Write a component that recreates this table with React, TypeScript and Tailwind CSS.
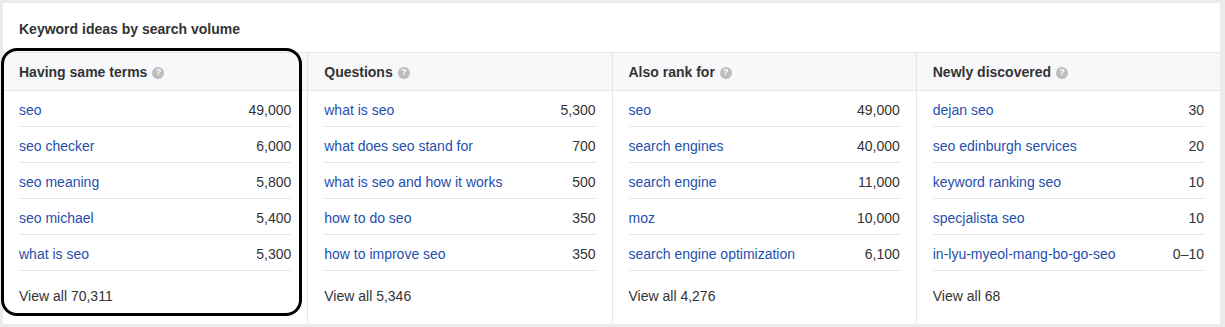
import React from "react";

type Row = { term: string; volume: string };
type Column = { title: string; rows: Row[]; total: string };

const columns: Column[] = [
  {
    title: "Having same terms",
    rows: [
      { term: "seo", volume: "49,000" },
      { term: "seo checker", volume: "6,000" },
      { term: "seo meaning", volume: "5,800" },
      { term: "seo michael", volume: "5,400" },
      { term: "what is seo", volume: "5,300" },
    ],
    total: "70,311",
  },
  {
    title: "Questions",
    rows: [
      { term: "what is seo", volume: "5,300" },
      { term: "what does seo stand for", volume: "700" },
      { term: "what is seo and how it works", volume: "500" },
      { term: "how to do seo", volume: "350" },
      { term: "how to improve seo", volume: "350" },
    ],
    total: "5,346",
  },
  {
    title: "Also rank for",
    rows: [
      { term: "seo", volume: "49,000" },
      { term: "search engines", volume: "40,000" },
      { term: "search engine", volume: "11,000" },
      { term: "moz", volume: "10,000" },
      { term: "search engine optimization", volume: "6,100" },
    ],
    total: "4,276",
  },
  {
    title: "Newly discovered",
    rows: [
      { term: "dejan seo", volume: "30" },
      { term: "seo edinburgh services", volume: "20" },
      { term: "keyword ranking seo", volume: "10" },
      { term: "specjalista seo", volume: "10" },
      { term: "in-lyu-myeol-mang-bo-go-seo", volume: "0–10" },
    ],
    total: "68",
  },
];

const HelpIcon = () => (
  <span className="ml-[5px] inline-flex h-[12px] w-[12px] items-center justify-center rounded-full bg-[#bdbdc0] text-[9px] font-bold leading-none text-white">
    ?
  </span>
);

const KeywordColumn = ({ column, first }: { column: Column; first: boolean }) => {
  return (
    <div className={first ? "flex flex-col" : "flex flex-col border-l border-[#e6e6e9]"}>
      <div className="flex h-[38px] items-center border-b border-[#e6e6e9] bg-[#f8f8fa] px-4 pt-[2px]">
        <span className="text-[14px] font-bold text-[#333]">{column.title}</span>
        <HelpIcon />
      </div>
      <div className="px-4">
        {column.rows.map((row) => (
          <div
            key={row.term}
            className="flex h-9 items-center justify-between border-b border-[#e6e6e9] pt-[3px]"
          >
            <a className="text-[14px] text-[#1f4fae]">{row.term}</a>
            <span className="text-[14px] text-[#333]">{row.volume}</span>
          </div>
        ))}
        <div className="flex h-[52px] items-center pb-[1px] text-[14px] text-[#333]">
          View all {column.total}
        </div>
      </div>
    </div>
  );
};

export default function App() {
  return (
    <div
      className="relative h-[327px] w-[1225px] bg-[#ebebee] pt-[3px] pr-[5px] pb-[3px] pl-[3px]"
      style={{ fontFamily: '"Liberation Sans", Arial, sans-serif' }}
    >
      <div className="flex h-full flex-col bg-white">
        <div className="flex h-[50px] items-center border-b border-[#e6e6e9] px-4 pt-[4px]">
          <h3 className="text-[14px] font-bold text-[#333]">Keyword ideas by search volume</h3>
        </div>
        <div className="grid flex-1 grid-cols-4">
          {columns.map((c, i) => (
            <KeywordColumn key={c.title} column={c} first={i === 0} />
          ))}
        </div>
      </div>
      <div className="pointer-events-none absolute top-[48px] left-[1px] h-[268px] w-[301px] rounded-[16px] border-[3px] border-black" />
    </div>
  );
}
